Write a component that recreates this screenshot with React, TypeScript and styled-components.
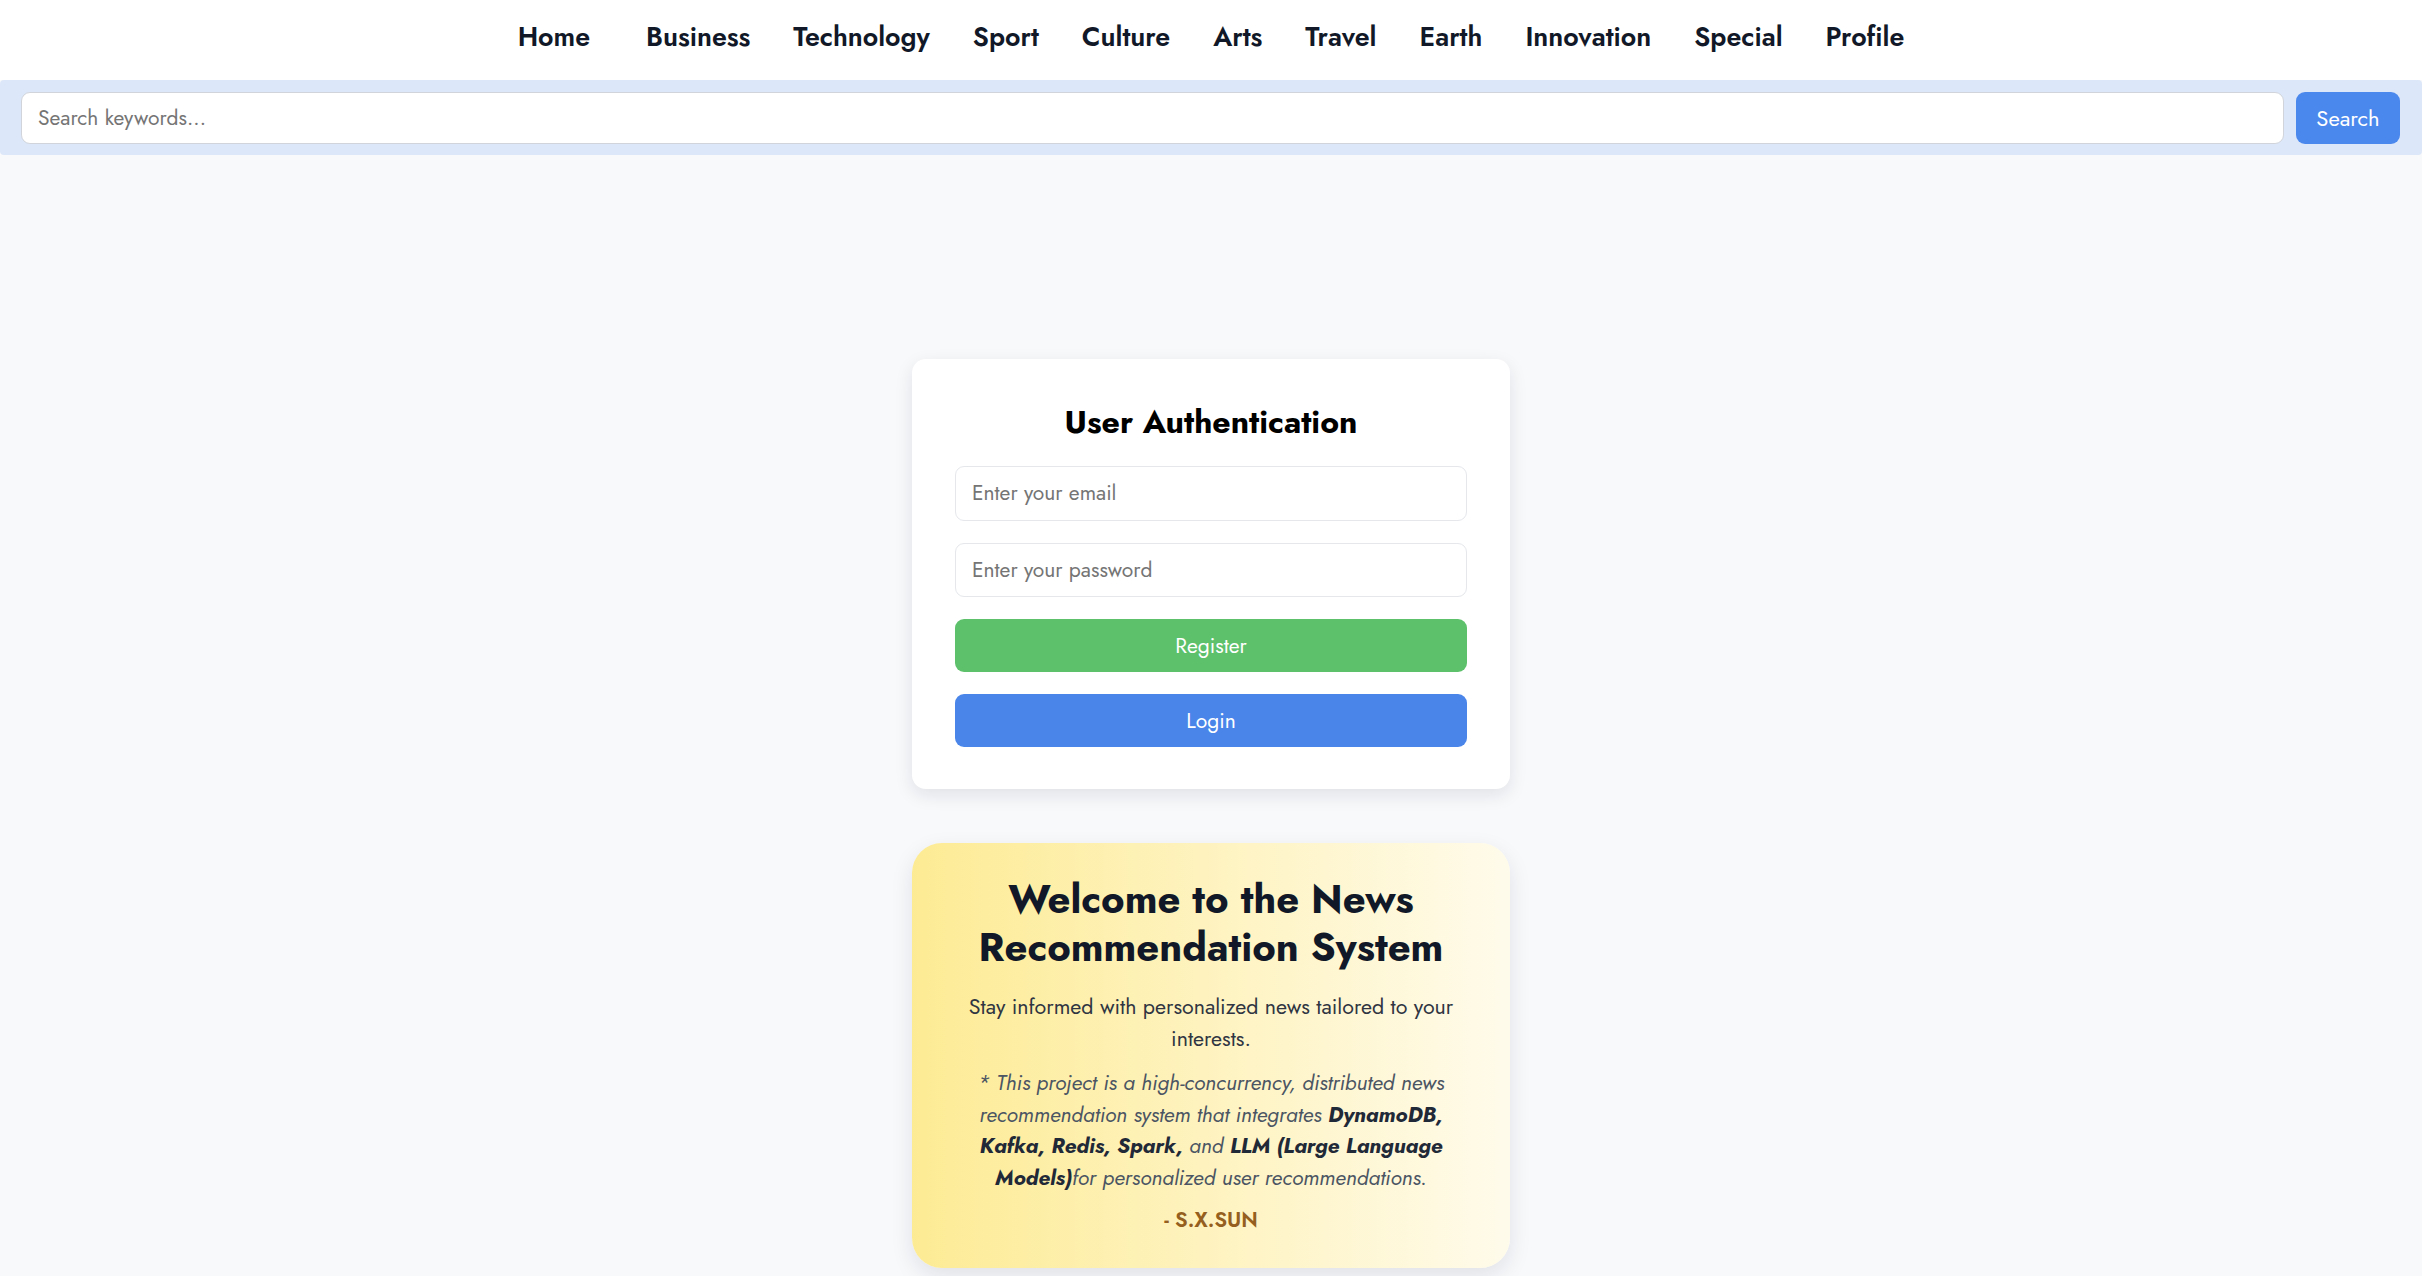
import React from 'react';
import styled, { createGlobalStyle } from 'styled-components';

const GlobalStyle = createGlobalStyle`
  *,
  *:before,
  *:after {
    box-sizing: border-box;
  }

  body, html {
    margin: 0;
    padding: 0;
  }

  body {
    font-family: 'Jost', 'Lato', 'Noto Sans', sans-serif;
    background-color: #f8f9fb;
    color: #111827;
  }
`;

const Page = styled.div`
  min-height: 100vh;
  background-color: #f8f9fb;
`;

const NavBar = styled.nav`
  height: 80px;
  background-color: #ffffff;
  display: flex;
  align-items: center;
  justify-content: center;
  gap: 43px;
  padding-bottom: 7px;
`;

const NavLink = styled.a<{ $spaced?: boolean }>`
  font-size: 26.8px;
  font-weight: 600;
  color: #111827;
  text-decoration: none;
  margin-right: ${({ $spaced }) => ($spaced ? '13px' : '0')};
  cursor: pointer;
`;

const SearchBand = styled.form`
  display: flex;
  align-items: center;
  gap: 12px;
  padding: 12px 22px 11px 21px;
  background-color: #dce7f9;
  border-radius: 4px;
`;

const SearchInput = styled.input`
  flex: 1;
  height: 52px;
  border: 1px solid #d1d5db;
  border-radius: 9px;
  padding: 0 16px;
  font-family: inherit;
  font-size: 21px;
  background: #ffffff;
  outline: none;

  ::placeholder {
    color: #9ca3af;
  }
`;

const SearchButton = styled.button`
  width: 104px;
  height: 52px;
  border: none;
  border-radius: 9px;
  background-color: #4b88ee;
  color: #ffffff;
  font-family: inherit;
  font-size: 22px;
  cursor: pointer;
`;

const Main = styled.main`
  display: flex;
  flex-direction: column;
  align-items: center;
  gap: 54px;
  padding: 204px 0 40px;
`;

const AuthCard = styled.section`
  width: 598px;
  padding: 43px 43px 42px;
  background-color: #ffffff;
  border-radius: 14px;
  box-shadow: 0 6px 18px rgba(15, 23, 42, 0.1);
  display: flex;
  flex-direction: column;
  gap: 22px;
`;

const AuthTitle = styled.h2`
  margin: 0 0 2px;
  font-size: 32px;
  line-height: 40px;
  font-weight: 700;
  color: #000000;
  text-align: center;
`;

const Field = styled.input`
  height: 54.5px;
  border: 1px solid #e5e7eb;
  border-radius: 9px;
  padding: 0 16px;
  font-family: inherit;
  font-size: 21px;
  outline: none;
  background: #ffffff;

  ::placeholder {
    color: #9ca3af;
  }
`;

const ActionButton = styled.button<{ $tone: 'green' | 'blue' }>`
  height: 53px;
  border: none;
  border-radius: 9px;
  background-color: ${({ $tone }) => ($tone === 'green' ? '#5dc16c' : '#4a86ea')};
  color: #ffffff;
  font-family: inherit;
  font-size: 21px;
  cursor: pointer;
`;

const WelcomeCard = styled.section`
  width: 598px;
  padding: 32px 43px;
  border-radius: 30px;
  background: linear-gradient(to right, #fdeb94, #fffbeb);
  box-shadow: 0 8px 22px rgba(15, 23, 42, 0.1);
  text-align: center;
`;

const WelcomeTitle = styled.h1`
  margin: 0 0 20px;
  font-size: 40px;
  line-height: 48px;
  font-weight: 700;
  color: #111827;
`;

const Lead = styled.p`
  margin: 0 0 12px;
  font-size: 21.4px;
  line-height: 32px;
  color: #2f3542;
`;

const Note = styled.p`
  margin: 0 0 11px;
  font-size: 21.2px;
  line-height: 31.5px;
  font-style: italic;
  color: #4b5563;

  strong {
    color: #1f2937;
    font-weight: 700;
  }
`;

const Signature = styled.p`
  margin: 0;
  font-size: 21px;
  line-height: 32px;
  font-weight: 600;
  color: #955f20;
`;

const sections = [
  'Business',
  'Technology',
  'Sport',
  'Culture',
  'Arts',
  'Travel',
  'Earth',
  'Innovation',
  'Special',
  'Profile',
];

export default function App() {
  return (
    <Page>
      <GlobalStyle />
      <NavBar>
        <NavLink $spaced>Home</NavLink>
        {sections.map((name) => (
          <NavLink key={name}>{name}</NavLink>
        ))}
      </NavBar>
      <SearchBand onSubmit={(e) => e.preventDefault()}>
        <SearchInput type="text" placeholder="Search keywords..." />
        <SearchButton type="submit">Search</SearchButton>
      </SearchBand>
      <Main>
        <AuthCard>
          <AuthTitle>User Authentication</AuthTitle>
          <Field type="email" placeholder="Enter your email" />
          <Field type="password" placeholder="Enter your password" />
          <ActionButton $tone="green">Register</ActionButton>
          <ActionButton $tone="blue">Login</ActionButton>
        </AuthCard>
        <WelcomeCard>
          <WelcomeTitle>Welcome to the News Recommendation System</WelcomeTitle>
          <Lead>Stay informed with personalized news tailored to your interests.</Lead>
          <Note>
            * This project is a high-concurrency, distributed news recommendation
            system that integrates <strong>DynamoDB, Kafka, Redis, Spark,</strong> and{' '}
            <strong>LLM (Large Language Models)</strong>for personalized user
            recommendations.
          </Note>
          <Signature>- S.X.SUN</Signature>
        </WelcomeCard>
      </Main>
    </Page>
  );
}
